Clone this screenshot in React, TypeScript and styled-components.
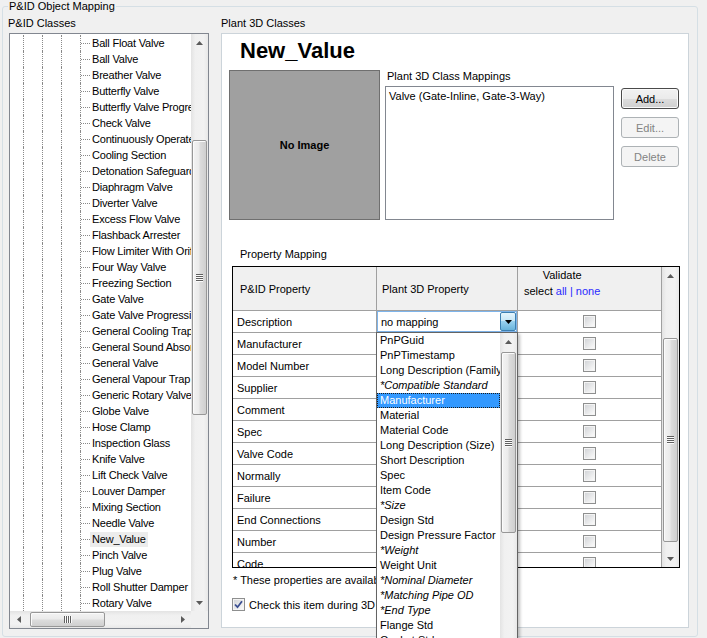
import React from "react";
import styled, { createGlobalStyle } from "styled-components";

const GlobalStyle = createGlobalStyle`
  html, body {
    margin: 0;
    padding: 0;
    background: #f0f0f0;
  }
  body {
    font-family: "Liberation Sans", Arial, sans-serif;
    font-size: 11px;
    color: #000;
  }
`;

const Window = styled.div`
  width: 707px;
  height: 638px;
  overflow: hidden;
  padding-left: 2px;
  box-sizing: border-box;
  background: #f0f0f0;
`;

const GroupBox = styled.fieldset`
  margin: 0;
  padding: 0 0 7px 5px;
  min-inline-size: auto;
  width: 696px;
  box-sizing: border-box;
  border: 1px solid #d5dfe5;
  border-radius: 3px;
  display: flex;
  align-items: flex-start;
  gap: 12px;
`;

const GroupLegend = styled.legend`
  padding: 0 1px;
  margin-left: 0;
  line-height: 13px;
`;

const Column = styled.div<{ $w: number }>`
  width: ${(p) => p.$w}px;
  display: flex;
  flex-direction: column;
`;

const SectionLabel = styled.div`
  line-height: 13px;
  margin: 4px 0 3px;
  white-space: nowrap;
`;

/* ---------- scrollbars ---------- */

const ScrollV = styled.div`
  display: flex;
  flex-direction: column;
  width: 17px;
  flex-shrink: 0;
  background: linear-gradient(90deg, #e3e3e3 0%, #f0f0f0 25%, #f2f2f2 75%, #e8e8e8 100%);
`;

const ScrollH = styled.div`
  display: flex;
  height: 17px;
  background: linear-gradient(180deg, #e3e3e3 0%, #f0f0f0 25%, #f2f2f2 75%, #e8e8e8 100%);
`;

const ArrowBtn = styled.div`
  flex: 0 0 17px;
  display: flex;
  align-items: center;
  justify-content: center;
`;

const TrackV = styled.div`
  flex: 1;
  display: flex;
  flex-direction: column;
  overflow: hidden;
`;

const TrackH = styled.div`
  flex: 1;
  display: flex;
  overflow: hidden;
`;

const ThumbV = styled.div<{ $offset: number; $size: number }>`
  margin: ${(p) => p.$offset}px 1px 0;
  height: ${(p) => p.$size}px;
  flex-shrink: 0;
  box-sizing: border-box;
  border: 1px solid #979797;
  border-radius: 2px;
  background: linear-gradient(90deg, #f3f3f3 0%, #ebebeb 45%, #dcdcdc 55%, #cfcfcf 100%);
  box-shadow: inset 1px 1px 0 #fbfbfb;
  display: flex;
  align-items: center;
  justify-content: center;
`;

const ThumbH = styled.div<{ $offset: number; $size: number }>`
  margin: 1px 0 1px ${(p) => p.$offset}px;
  width: ${(p) => p.$size}px;
  flex-shrink: 0;
  box-sizing: border-box;
  border: 1px solid #979797;
  border-radius: 2px;
  background: linear-gradient(180deg, #f3f3f3 0%, #ebebeb 45%, #dcdcdc 55%, #cfcfcf 100%);
  box-shadow: inset 1px 1px 0 #fbfbfb;
  display: flex;
  align-items: center;
  justify-content: center;
`;

const GripV = styled.span`
  width: 7px;
  height: 8px;
  background: repeating-linear-gradient(180deg, #5f5f5f 0 1px, #fbfbfb 1px 2px);
`;

const GripH = styled.span`
  width: 8px;
  height: 7px;
  background: repeating-linear-gradient(90deg, #5f5f5f 0 1px, #fbfbfb 1px 2px);
`;

type Dir = "up" | "down" | "left" | "right";

const Arrow = ({ dir, color = "#5a5a5a" }: { dir: Dir; color?: string }) => {
  const horiz = dir === "left" || dir === "right";
  const pts = {
    up: "0,4 7,4 3.5,0",
    down: "0,0 7,0 3.5,4",
    left: "4,0 4,7 0,3.5",
    right: "0,0 0,7 4,3.5",
  }[dir];
  return (
    <svg width={horiz ? 4 : 7} height={horiz ? 7 : 4} viewBox={horiz ? "0 0 4 7" : "0 0 7 4"}>
      <polygon points={pts} fill={color} />
    </svg>
  );
};

const VScrollBar = ({ offset, size, noDown }: { offset: number; size: number; noDown?: boolean }) => (
  <ScrollV>
    <ArrowBtn>
      <Arrow dir="up" />
    </ArrowBtn>
    <TrackV>
      <ThumbV $offset={offset} $size={size}>
        <GripV />
      </ThumbV>
    </TrackV>
    {!noDown && (
      <ArrowBtn>
        <Arrow dir="down" />
      </ArrowBtn>
    )}
  </ScrollV>
);

const HScrollBar = ({ offset, size }: { offset: number; size: number }) => (
  <ScrollH>
    <ArrowBtn>
      <Arrow dir="left" />
    </ArrowBtn>
    <TrackH>
      <ThumbH $offset={offset} $size={size}>
        <GripH />
      </ThumbH>
    </TrackH>
    <ArrowBtn>
      <Arrow dir="right" />
    </ArrowBtn>
  </ScrollH>
);

/* ---------- tree ---------- */

const TreeBox = styled.div`
  margin-left: 1px;
  width: 200px;
  height: 596px;
  box-sizing: border-box;
  border: 1px solid #828790;
  background: #fff;
  display: grid;
  grid-template-columns: 1fr 17px;
  grid-template-rows: 1fr 17px;
`;

const TreeList = styled.div`
  overflow: hidden;
  padding: 1px 0 0 13px;
`;

const TreeRow = styled.div`
  display: flex;
  height: 16px;
  align-items: center;
`;

const Guide = styled.span`
  align-self: stretch;
  flex: 0 0 19px;
  border-left: 1px dotted #8a8a8a;
  box-sizing: border-box;
`;

const Branch = styled.span`
  align-self: stretch;
  flex: 0 0 10px;
  border-left: 1px dotted #8a8a8a;
  box-sizing: border-box;
  display: flex;
  align-items: center;
  &::after {
    content: "";
    width: 9px;
    border-top: 1px dotted #8a8a8a;
  }
`;

const NodeLabel = styled.span<{ $selected?: boolean }>`
  white-space: nowrap;
  line-height: 15px;
  padding: 0 2px;
  letter-spacing: -0.2px;
  background: ${(p) => (p.$selected ? "#ececec" : "transparent")};
`;

const Corner = styled.div`
  background: #f0f0f0;
`;

const treeItems = [
  "Ball Float Valve",
  "Ball Valve",
  "Breather Valve",
  "Butterfly Valve",
  "Butterfly Valve Progressive",
  "Check Valve",
  "Continuously Operated Valve",
  "Cooling Section",
  "Detonation Safeguard",
  "Diaphragm Valve",
  "Diverter Valve",
  "Excess Flow Valve",
  "Flashback Arrester",
  "Flow Limiter With Orifice",
  "Four Way Valve",
  "Freezing Section",
  "Gate Valve",
  "Gate Valve Progressive",
  "General Cooling Trap",
  "General Sound Absorber",
  "General Valve",
  "General Vapour Trap",
  "Generic Rotary Valve",
  "Globe Valve",
  "Hose Clamp",
  "Inspection Glass",
  "Knife Valve",
  "Lift Check Valve",
  "Louver Damper",
  "Mixing Section",
  "Needle Valve",
  "New_Value",
  "Pinch Valve",
  "Plug Valve",
  "Roll Shutter Damper",
  "Rotary Valve",
];

/* ---------- right panel ---------- */

const ClassPanel = styled.div`
  width: 468px;
  height: 595px;
  box-sizing: border-box;
  border: 1px solid #ccd4da;
  background: #fff;
  position: relative;
  display: flex;
  flex-direction: column;
`;

const Title = styled.div`
  margin: 4px 0 0 18px;
  font-size: 22px;
  font-weight: bold;
  line-height: 26px;
`;

const TopSection = styled.div`
  display: flex;
  margin: 6px 0 0 7px;
`;

const ImageBox = styled.div`
  width: 151px;
  height: 150px;
  box-sizing: border-box;
  border: 1px solid #6f6f6f;
  background: #a0a0a0;
  display: flex;
  align-items: center;
  justify-content: center;
  font-weight: bold;
`;

const MappingCol = styled.div`
  margin-left: 5px;
  width: 229px;
  display: flex;
  flex-direction: column;
`;

const MappingLabel = styled.div`
  padding-left: 2px;
  line-height: 13px;
  margin-bottom: 3px;
`;

const MappingList = styled.div`
  height: 134px;
  box-sizing: border-box;
  border: 1px solid #828790;
  padding: 3px 3px;
  line-height: 13px;
`;

const ButtonCol = styled.div`
  margin: 18px 0 0 7px;
  display: flex;
  flex-direction: column;
  gap: 8px;
`;

const WinButton = styled.button<{ $default?: boolean }>`
  width: 58px;
  height: 21px;
  box-sizing: border-box;
  padding: 0;
  font-family: inherit;
  font-size: 11px;
  border-radius: 3px;
  color: ${(p) => (p.disabled ? "#838383" : "#000")};
  border: 1px solid ${(p) => (p.disabled ? "#adb2b5" : p.$default ? "#4a4a4a" : "#707070")};
  background: ${(p) =>
    p.disabled
      ? "#f4f4f4"
      : "linear-gradient(180deg, #f2f2f2 0%, #ebebeb 50%, #dddddd 50%, #cfcfcf 100%)"};
  box-shadow: ${(p) => (p.disabled ? "none" : "inset 0 0 0 1px #fafafa")};
`;

const PropLabel = styled.div`
  margin: 28px 0 0 18px;
  line-height: 13px;
`;

/* ---------- property grid ---------- */

const Grid = styled.div`
  margin: 5px 0 0 10px;
  width: 448px;
  height: 302px;
  box-sizing: border-box;
  border: 1px solid #000;
  background: #fff;
  display: flex;
`;

const GridMain = styled.div`
  width: 429px;
  display: flex;
  flex-direction: column;
`;

const cols = "144px 141px 144px";

const HeaderRow = styled.div`
  display: grid;
  grid-template-columns: ${cols};
  height: 44px;
  background: #f0f0f0;
`;

const HeaderCell = styled.div<{ $pad: number }>`
  box-sizing: border-box;
  border-right: 1px solid #a0a0a0;
  border-bottom: 1px solid #a0a0a0;
  display: flex;
  align-items: center;
  padding-left: ${(p) => p.$pad}px;
  white-space: nowrap;
`;

const ValidateHeader = styled(HeaderCell)`
  align-items: flex-start;
`;

const ValidateStack = styled.div`
  display: flex;
  flex-direction: column;
  align-items: center;
  line-height: 16px;
`;

const Link = styled.span`
  color: #2a2aff;
`;

const DataRow = styled.div<{ $partial?: boolean }>`
  display: grid;
  grid-template-columns: ${cols};
  grid-auto-rows: 22px;
  height: ${(p) => (p.$partial ? 14 : 22)}px;
  overflow: ${(p) => (p.$partial ? "hidden" : "visible")};
`;

const Cell = styled.div<{ $center?: boolean; $flush?: boolean }>`
  box-sizing: border-box;
  border-right: 1px solid #a0a0a0;
  border-bottom: 1px solid #a0a0a0;
  display: flex;
  align-items: center;
  justify-content: ${(p) => (p.$center ? "center" : "flex-start")};
  padding-left: ${(p) => (p.$center || p.$flush ? 0 : 4)}px;
  position: relative;
  white-space: nowrap;
`;

const CheckBox = styled.span`
  width: 13px;
  height: 13px;
  box-sizing: border-box;
  border: 1px solid #8e8f8f;
  padding: 1px;
  background: linear-gradient(135deg, #d3d5d8, #fafafa) content-box, #f4f4f4;
  display: inline-flex;
  align-items: center;
  justify-content: center;
  flex-shrink: 0;
`;

const Combo = styled.div`
  width: 100%;
  height: 100%;
  box-sizing: border-box;
  border: 1px solid #7eb4ea;
  background: #fff;
  display: flex;
  align-items: center;
  padding-left: 3px;
`;

const ComboText = styled.span`
  flex: 1;
`;

const DropButton = styled.span`
  width: 16px;
  height: 100%;
  box-sizing: border-box;
  border: 1px solid #3c7fb1;
  border-radius: 2px;
  background: linear-gradient(180deg, #e5f4fc 0%, #c4e5f6 50%, #98d1ef 50%, #68b3db 100%);
  display: flex;
  align-items: center;
  justify-content: center;
`;

const DropList = styled.div`
  position: absolute;
  top: 100%;
  left: -1px;
  width: 142px;
  height: 330px;
  box-sizing: border-box;
  border: 1px solid #646464;
  background: #fff;
  display: flex;
  z-index: 10;
  box-shadow: 2px 2px 3px rgba(0, 0, 0, 0.25);
`;

const DropItems = styled.div`
  flex: 1;
  overflow: hidden;
`;

const DropItem = styled.div<{ $italic?: boolean; $selected?: boolean }>`
  height: 15px;
  line-height: 13px;
  box-sizing: border-box;
  padding-left: 2px;
  white-space: nowrap;
  font-style: ${(p) => (p.$italic ? "italic" : "normal")};
  color: ${(p) => (p.$selected ? "#fff" : "#000")};
  background: ${(p) => (p.$selected ? "#3399ff" : "transparent")};
  border: 1px ${(p) => (p.$selected ? "dotted #1b1b1b" : "solid transparent")};
`;

const Note = styled.div`
  margin: 6px 0 0 11px;
  line-height: 13px;
  white-space: nowrap;
`;

const CheckRow = styled.label`
  margin: 11px 0 0 10px;
  display: flex;
  align-items: center;
  gap: 4px;
  white-space: nowrap;
`;

const rows = [
  "Description",
  "Manufacturer",
  "Model Number",
  "Supplier",
  "Comment",
  "Spec",
  "Valve Code",
  "Normally",
  "Failure",
  "End Connections",
  "Number",
  "Code",
];

const dropItems: { t: string; i?: boolean }[] = [
  { t: "PnPGuid" },
  { t: "PnPTimestamp" },
  { t: "Long Description (Family)" },
  { t: "*Compatible Standard", i: true },
  { t: "Manufacturer" },
  { t: "Material" },
  { t: "Material Code" },
  { t: "Long Description (Size)" },
  { t: "Short Description" },
  { t: "Spec" },
  { t: "Item Code" },
  { t: "*Size", i: true },
  { t: "Design Std" },
  { t: "Design Pressure Factor" },
  { t: "*Weight", i: true },
  { t: "Weight Unit" },
  { t: "*Nominal Diameter", i: true },
  { t: "*Matching Pipe OD", i: true },
  { t: "*End Type", i: true },
  { t: "Flange Std" },
  { t: "Gasket Std" },
  { t: "Bolt Std" },
];

const CheckMark = () => (
  <svg width="9" height="9" viewBox="0 0 9 9">
    <path d="M1 4.5 L3.5 7.2 L8 1.2" fill="none" stroke="#3b4f91" strokeWidth="1.8" />
  </svg>
);

export default function App() {
  return (
    <>
      <GlobalStyle />
      <Window>
        <GroupBox>
          <GroupLegend>P&amp;ID Object Mapping</GroupLegend>
          <Column $w={201}>
            <SectionLabel>P&amp;ID Classes</SectionLabel>
            <TreeBox>
              <TreeList>
                {treeItems.map((name) => (
                  <TreeRow key={name}>
                    <Guide />
                    <Guide />
                    <Guide />
                    <Branch />
                    <NodeLabel $selected={name === "New_Value"}>{name}</NodeLabel>
                  </TreeRow>
                ))}
              </TreeList>
              <VScrollBar offset={89} size={275} />
              <HScrollBar offset={3} size={75} />
              <Corner />
            </TreeBox>
          </Column>
          <Column $w={468}>
            <SectionLabel>Plant 3D Classes</SectionLabel>
            <ClassPanel>
              <Title>New_Value</Title>
              <TopSection>
                <ImageBox>No Image</ImageBox>
                <MappingCol>
                  <MappingLabel>Plant 3D Class Mappings</MappingLabel>
                  <MappingList>Valve (Gate-Inline, Gate-3-Way)</MappingList>
                </MappingCol>
                <ButtonCol>
                  <WinButton $default>Add...</WinButton>
                  <WinButton disabled>Edit...</WinButton>
                  <WinButton disabled>Delete</WinButton>
                </ButtonCol>
              </TopSection>
              <PropLabel>Property Mapping</PropLabel>
              <Grid>
                <GridMain>
                  <HeaderRow>
                    <HeaderCell $pad={7}>P&amp;ID Property</HeaderCell>
                    <HeaderCell $pad={5}>Plant 3D Property</HeaderCell>
                    <ValidateHeader $pad={6}>
                      <ValidateStack>
                        <span>Validate</span>
                        <span>
                          select <Link>all</Link> <Link>|</Link> <Link>none</Link>
                        </span>
                      </ValidateStack>
                    </ValidateHeader>
                  </HeaderRow>
                  {rows.map((r, i) => (
                    <DataRow key={r} $partial={i === rows.length - 1}>
                      <Cell>{r}</Cell>
                      {i === 0 ? (
                        <Cell $flush>
                          <Combo>
                            <ComboText>no mapping</ComboText>
                            <DropButton>
                              <Arrow dir="down" color="#000" />
                            </DropButton>
                          </Combo>
                          <DropList>
                            <DropItems>
                              {dropItems.map((d) => (
                                <DropItem
                                  key={d.t}
                                  $italic={d.i}
                                  $selected={d.t === "Manufacturer"}
                                >
                                  {d.t}
                                </DropItem>
                              ))}
                            </DropItems>
                            <VScrollBar offset={2} size={181} />
                          </DropList>
                        </Cell>
                      ) : (
                        <Cell />
                      )}
                      <Cell $center>
                        <CheckBox />
                      </Cell>
                    </DataRow>
                  ))}
                </GridMain>
                <VScrollBar offset={54} size={204} />
              </Grid>
              <Note>* These properties are available only in Plant 3D</Note>
              <CheckRow>
                <CheckBox>
                  <CheckMark />
                </CheckBox>
                Check this item during 3D validation
              </CheckRow>
            </ClassPanel>
          </Column>
        </GroupBox>
      </Window>
    </>
  );
}
